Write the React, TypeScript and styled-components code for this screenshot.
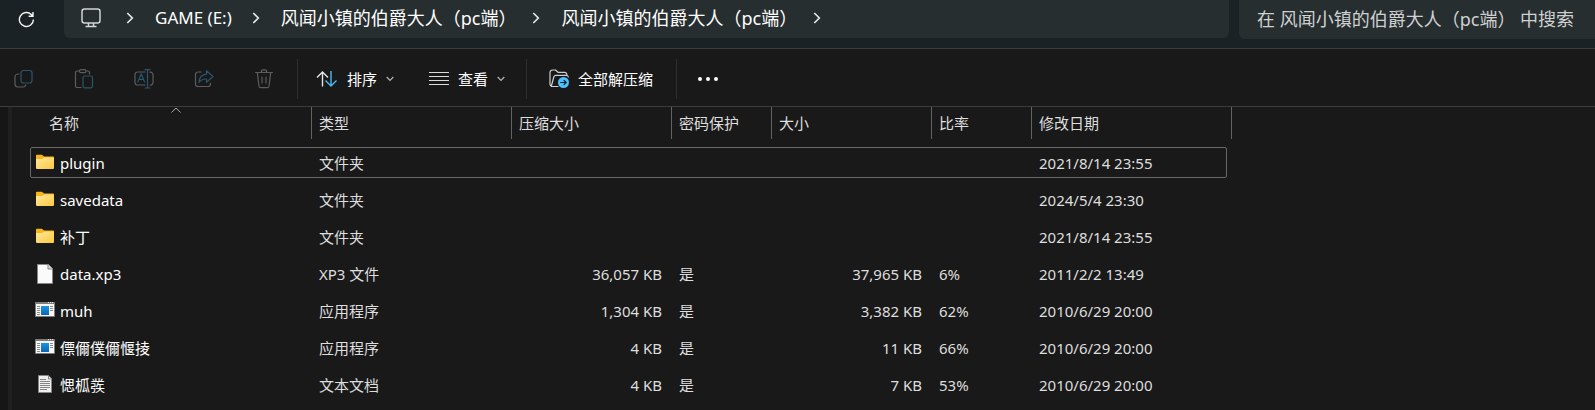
import React from 'react';
import styled, { createGlobalStyle, css } from 'styled-components';

const GlobalStyle = createGlobalStyle`
  *, *::before, *::after { box-sizing: border-box; }
  html { background: #191919; }
  body {
    margin: 0;
    background: #191919;
    color: #ffffff;
    font: 15px/20px "Noto Sans", "Noto Sans CJK SC", sans-serif;
    overflow: hidden;
  }
  button, input { font: inherit; color: inherit; }
`;

const Page = styled.div`
  min-height: 100vh;
  display: flex;
  flex-direction: column;
`;

const plainButton = css`
  display: flex;
  align-items: center;
  border: 0;
  padding: 0;
  background: none;
  white-space: nowrap;
`;

const NavBar = styled.header`
  display: flex;
  align-items: flex-start;
  height: 49px;
  background: #1b2225;
  border-bottom: 1px solid #3c3c3c;
  font-size: 18px;
`;

const RefreshButton = styled.button`
  ${plainButton}
  width: 64px;
  height: 38px;
  padding-left: 18px;
  flex: none;
`;

const AddressBar = styled.nav`
  flex: 1;
  min-width: 0;
  height: 38px;
  border-radius: 0 0 6px 6px;
  background: #272e30;
  overflow: hidden;
`;

const Crumbs = styled.ol`
  display: flex;
  align-items: center;
  height: 36px;
  margin: 0;
  padding: 0 0 0 17px;
  list-style: none;
`;

const Crumb = styled.li<{ $gap: number }>`
  display: flex;
  align-items: center;
  gap: ${(p) => p.$gap}px;
  padding-right: 21px;
`;

const CrumbButton = styled.button<{ $latin?: boolean }>`
  ${plainButton}
  font-size: ${(p) => (p.$latin ? 17 : 18)}px;
`;

const SearchBox = styled.input`
  flex: none;
  width: 356px;
  height: 39px;
  margin-left: 10px;
  padding: 0 0 2px 18px;
  border: 0;
  border-radius: 0 0 0 6px;
  background: #272e30;
  outline: 0;
  &::placeholder { color: #cfd1d1; opacity: 1; }
`;

const Toolbar = styled.div`
  display: flex;
  align-items: center;
  height: 58px;
  padding-top: 2px;
  border-bottom: 1px solid #3c3c3c;
`;

const ToolGroup = styled.div<{ $gap: number; $left: number; $right: number }>`
  display: flex;
  align-items: center;
  height: 40px;
  gap: ${(p) => p.$gap}px;
  padding: 0 ${(p) => p.$right}px 0 ${(p) => p.$left}px;
  & + & { border-left: 1px solid #2e2e2e; }
`;

const ToolButton = styled.button`
  ${plainButton}
  gap: 9px;
`;

const Content = styled.main`
  flex: 1;
  display: flex;
`;

const Splitter = styled.div`
  width: 12px;
  border-left: 8px solid #161616;
  background: #202020;
`;

const FilePane = styled.div`
  flex: 1;
  min-width: 0;
  padding-left: 18px;
`;

const FileTable = styled.table`
  display: block;
`;

const Head = styled.thead`
  display: block;
`;

const columns = css`
  display: grid;
  grid-template-columns: 282px 200px 160px 100px 160px 100px 200px;
`;

const HeadRow = styled.tr`
  ${columns}
  height: 32px;
`;

const HeadCell = styled.th<{ $first?: boolean }>`
  position: relative;
  padding: 6px 0 0 ${(p) => (p.$first ? 19 : 7)}px;
  border-right: 1px solid #636363;
  color: #dedede;
  font-weight: 400;
  text-align: left;
`;

const SortMark = styled.svg`
  position: absolute;
  top: 0;
  left: 50%;
`;

const Body = styled.tbody`
  display: flex;
  flex-direction: column;
  gap: 6px;
  padding-top: 8px;
`;

const FileRow = styled.tr<{ $focused: boolean }>`
  ${columns}
  width: 1197px;
  height: 31px;
  grid-template-columns: 281px 200px 160px 100px 160px 100px 1fr;
  border: 1px solid ${(p) => (p.$focused ? '#686868' : 'transparent')};
  border-radius: 2px;
`;

const Cell = styled.td<{ $right?: boolean }>`
  padding: 5px ${(p) => (p.$right ? 10 : 0)}px 0 7px;
  color: #dedede;
  text-align: ${(p) => (p.$right ? 'right' : 'left')};
  white-space: nowrap;
`;

const NameCell = styled(Cell)`
  display: flex;
  gap: 5px;
  padding: 5px 0 0 4px;
  color: #ffffff;
`;

const Chevron = () => (
  <svg width="8" height="12" viewBox="0 0 8 12" fill="none" stroke="#e4e6e6" strokeWidth="1.7" aria-hidden="true">
    <path d="M1.3 1 6.3 6 1.3 11" />
  </svg>
);

const SmallChevron = () => (
  <svg width="8" height="6" viewBox="0 0 8 6" fill="none" stroke="#b5b5b5" strokeWidth="1.2" aria-hidden="true">
    <path d="M.7 1 4 4.4 7.3 1" />
  </svg>
);

const Icon = ({ children }: { children: React.ReactNode }) => (
  <svg width="20" height="20" viewBox="0 0 20 20" fill="none" strokeWidth="1.2" strokeLinecap="round" strokeLinejoin="round" aria-hidden="true">
    {children}
  </svg>
);

const GREY = '#5c5c5c';
const BLUE = '#28566d';

const RefreshIcon = () => (
  <svg width="17" height="17" viewBox="0 0 17 17" fill="none" stroke="#f4f5f5" strokeWidth="1.4" aria-hidden="true">
    <path d="M15.4 8.5A7 7 0 1 1 13.3 3.5L14.8 5M15 1V5.3H10.6" />
  </svg>
);

const MonitorIcon = () => (
  <svg width="20" height="20" viewBox="0 0 20 20" fill="none" stroke="#d3d5d5" strokeWidth="1.5" aria-hidden="true">
    <rect x="1" y="1" width="18" height="14" rx="2.5" />
    <path d="M7.5 15v3M12.5 15v3M4.5 18.4h11" />
  </svg>
);

const CopyIcon = () => (
  <Icon>
    <path stroke={GREY} d="M5 5H4A3 3 0 0 0 1 8v7a3 3 0 0 0 3 3h5a3 3 0 0 0 2.8-2" />
    <rect stroke={BLUE} x="7" y="1.5" width="11" height="12.5" rx="2.5" />
  </Icon>
);

const PasteIcon = () => (
  <Icon>
    <path stroke={GREY} d="M7 18.5H3A1.5 1.5 0 0 1 1.5 17V3.5A1.5 1.5 0 0 1 3 2H5M12 2h2a1.5 1.5 0 0 1 1.5 1.5V5" />
    <rect stroke={GREY} x="5.5" y=".7" width="6.5" height="3" rx="1.5" />
    <rect stroke={BLUE} x="9" y="7" width="9.5" height="11.8" rx="1.5" />
  </Icon>
);

const RenameIcon = () => (
  <Icon>
    <path stroke={GREY} d="M11 3H3.5A2.500 2.500 0 0 0 1 5.500v8A2.500 2.500 0 0 0 3.500 16H11M16 3.200a2.500 2.500 0 0 1 3 2.300v8A2.500 2.500 0 0 1 16 16" />
    <path stroke={BLUE} d="m3.800 13 3.400-8.300L10.600 13M5 10.400h4.400M11 .7h5M11 19h5M13.500.7V19" />
  </Icon>
);

const ShareIcon = () => (
  <Icon>
    <path stroke={GREY} d="M7 3H4a2.500 2.500 0 0 0-2.500 2.500V15A2.500 2.500 0 0 0 4 17.500h10a2.500 2.500 0 0 0 2.500-2.500v-1" />
    <path stroke={BLUE} d="M12.500 1.800 19 7.500l-6.500 5.700V10C9 9.800 6.800 11 5 13.500 5.200 9 7.500 5.500 12.500 5.200z" />
  </Icon>
);

const TrashIcon = () => (
  <Icon>
    <path stroke={GREY} d="M1.500 3.500h17M7.300 3.300a2.700 2.700 0 0 1 5.400 0M3.300 3.700 5 17a2 2 0 0 0 2 1.700h6a2 2 0 0 0 2-1.700l1.700-13.300M8 8v6M12 8v6" />
  </Icon>
);

const SortIcon = () => (
  <svg width="22" height="18" viewBox="0 0 22 18" fill="none" strokeWidth="1.4" aria-hidden="true">
    <path stroke="#e6e6e6" d="M6.500 16.500V2M1 7.500 6.500 2 12 7.500" />
    <path stroke="#4cb8f5" d="M15 1v14.800M9.500 10.500 15 16l5.500-5.500" />
  </svg>
);

const ViewIcon = () => (
  <Icon>
    <path stroke="#dcdcdc" strokeLinecap="butt" d="M0 3.500h20M0 7.500h20M0 11.500h20M0 15.500h20" />
  </Icon>
);

const ExtractIcon = () => (
  <Icon>
    <path stroke="#cfcfcf" d="M9 17.500H3.500A2.500 2.500 0 0 1 1 15V3.500A2.500 2.500 0 0 1 3.500 1h3L9 3.300h6.500A2.300 2.300 0 0 1 17.800 6M2.500 16.500 4.800 8A2.300 2.300 0 0 1 7 6.300h10.500A2 2 0 0 1 19.300 8" />
    <circle cx="14.500" cy="13.500" r="5.500" fill="#4cc2ff" />
    <path stroke="#10202a" d="M11.700 13.500h5.400M15 11.300l2.200 2.200L15 15.700" />
  </Icon>
);

const MoreIcon = () => (
  <svg width="22" height="6" viewBox="0 0 22 6" fill="#ffffff" aria-hidden="true">
    <circle cx="3" cy="3" r="2" />
    <circle cx="11" cy="3" r="2" />
    <circle cx="19" cy="3" r="2" />
  </svg>
);

const FolderIcon = () => (
  <svg width="20" height="18" viewBox="0 0 20 18" aria-hidden="true">
    <defs>
      <linearGradient id="folder" x1="0" y1="0" x2="1" y2="1">
        <stop offset="0" stopColor="#ffe8a0" />
        <stop offset="1" stopColor="#fdc93c" />
      </linearGradient>
    </defs>
    <path fill="#f6b51a" d="M1 2.500a.8.8 0 0 1 .8-.8H7L9 3.500H18.200a.8.8 0 0 1 .8.8V8H1z" />
    <path fill="url(#folder)" d="M1 6H7L9 4.500H19V15a1 1 0 0 1-1 1H2a1 1 0 0 1-1-1z" />
  </svg>
);

const BlankFileIcon = () => (
  <svg width="20" height="20" viewBox="0 0 20 20" aria-hidden="true">
    <path fill="#fafafa" stroke="#858585" d="M2.500.5h11l4 4v15h-15z" />
    <path fill="#dddddd" stroke="#858585" d="M13 .5V5h4.500" />
  </svg>
);

const TextFileIcon = () => (
  <svg width="20" height="20" viewBox="0 0 20 20" aria-hidden="true">
    <path fill="#efefef" stroke="#858585" d="M3.500.5h10l3 3v14h-13z" />
    <path fill="none" stroke="#858585" d="M13.500 1v3h3M5 4.500h6M5 6.500h10M5 8.500h10M5 10.500h10M5 12.500h10M5 14.500h7" />
  </svg>
);

const AppIcon = () => (
  <svg width="20" height="18" viewBox="0 0 20 18" aria-hidden="true">
    <defs>
      <linearGradient id="app" x1="0" y1="0" x2="0" y2="1">
        <stop offset="0" stopColor="#1c95e2" />
        <stop offset="1" stopColor="#0b66b8" />
      </linearGradient>
    </defs>
    <path fill="#f7f7f7" stroke="#7d7d7d" d="M.5 1.500h19v14H.5z" />
    <path stroke="#7d7d7d" d="M0 2.500h20" />
    <path stroke="#e6e6e6" strokeDasharray="1 1" d="M13 1.500h6" />
    <path stroke="#8b8b8b" d="M2 5.500h3M2 7.500h3M2 9.500h3M2 11.500h3M2 13.500h3M15 5.500h3M15 7.500h3M15 9.500h3" />
    <path fill="url(#app)" d="M6 5h8v9H6z" />
  </svg>
);

const icons = { folder: FolderIcon, blank: BlankFileIcon, text: TextFileIcon, app: AppIcon };

type Entry = { icon: keyof typeof icons; name: string; cells: string[] };

const headings = ['名称', '类型', '压缩大小', '密码保护', '大小', '比率', '修改日期'];

const entries: Entry[] = [
  { icon: 'folder', name: 'plugin', cells: ['文件夹', '', '', '', '', '2021/8/14 23:55'] },
  { icon: 'folder', name: 'savedata', cells: ['文件夹', '', '', '', '', '2024/5/4 23:30'] },
  { icon: 'folder', name: '补丁', cells: ['文件夹', '', '', '', '', '2021/8/14 23:55'] },
  { icon: 'blank', name: 'data.xp3', cells: ['XP3 文件', '36,057 KB', '是', '37,965 KB', '6%', '2011/2/2 13:49'] },
  { icon: 'app', name: 'muh', cells: ['应用程序', '1,304 KB', '是', '3,382 KB', '62%', '2010/6/29 20:00'] },
  { icon: 'app', name: '僄儞僕儞愝掕', cells: ['应用程序', '4 KB', '是', '11 KB', '66%', '2010/6/29 20:00'] },
  { icon: 'text', name: '愢柧彂', cells: ['文本文档', '4 KB', '是', '7 KB', '53%', '2010/6/29 20:00'] },
];

const editTools = [
  { label: '复制', Glyph: CopyIcon },
  { label: '粘贴', Glyph: PasteIcon },
  { label: '重命名', Glyph: RenameIcon },
  { label: '共享', Glyph: ShareIcon },
  { label: '删除', Glyph: TrashIcon },
];

const folderName = '风闻小镇的伯爵大人（pc端）';

export default function App() {
  return (
    <Page>
      <GlobalStyle />
      <NavBar>
        <RefreshButton aria-label="刷新"><RefreshIcon /></RefreshButton>
        <AddressBar aria-label="地址">
          <Crumbs>
            <Crumb $gap={25}><CrumbButton aria-label="此电脑"><MonitorIcon /></CrumbButton><Chevron /></Crumb>
            <Crumb $gap={20}><CrumbButton $latin>GAME (E:)</CrumbButton><Chevron /></Crumb>
            <Crumb $gap={16}><CrumbButton>{folderName}</CrumbButton><Chevron /></Crumb>
            <Crumb $gap={16}><CrumbButton>{folderName}</CrumbButton><Chevron /></Crumb>
          </Crumbs>
        </AddressBar>
        <SearchBox type="text" aria-label="搜索" placeholder={`在 ${folderName} 中搜索`} />
      </NavBar>
      <Toolbar role="toolbar">
        <ToolGroup $gap={40} $left={14} $right={23}>
          {editTools.map(({ label, Glyph }) => (
            <ToolButton key={label} aria-label={label} disabled><Glyph /></ToolButton>
          ))}
        </ToolGroup>
        <ToolGroup $gap={35} $left={18} $right={21}>
          <ToolButton><SortIcon />排序<SmallChevron /></ToolButton>
          <ToolButton><ViewIcon />查看<SmallChevron /></ToolButton>
        </ToolGroup>
        <ToolGroup $gap={0} $left={22} $right={23}>
          <ToolButton><ExtractIcon />全部解压缩</ToolButton>
        </ToolGroup>
        <ToolGroup $gap={0} $left={20} $right={0}>
          <ToolButton aria-label="更多"><MoreIcon /></ToolButton>
        </ToolGroup>
      </Toolbar>
      <Content>
        <Splitter />
        <FilePane>
          <FileTable>
            <Head>
              <HeadRow>
                {headings.map((heading, i) => (
                  <HeadCell key={heading} $first={i === 0} scope="col">
                    {heading}
                    {i === 0 && (
                      <SortMark width="10" height="7" viewBox="0 0 10 7" fill="none" stroke="#a8a8a8" aria-hidden="true">
                        <path d="M.5 5.500 5 1l4.500 4.500" />
                      </SortMark>
                    )}
                  </HeadCell>
                ))}
              </HeadRow>
            </Head>
            <Body>
              {entries.map(({ icon, name, cells }, row) => {
                const Glyph = icons[icon];
                return (
                  <FileRow key={name} $focused={row === 0}>
                    <NameCell><Glyph />{name}</NameCell>
                    {cells.map((text, i) => (
                      <Cell key={i} $right={i === 1 || i === 3}>{text}</Cell>
                    ))}
                  </FileRow>
                );
              })}
            </Body>
          </FileTable>
        </FilePane>
      </Content>
    </Page>
  );
}
